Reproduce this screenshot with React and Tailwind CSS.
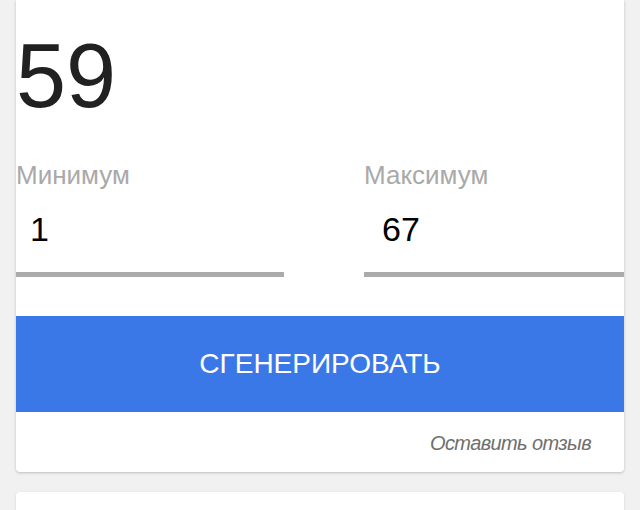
import React, { useState } from 'react';

const Field = ({ label, value, onChange, width, pad }) => (
  <div className={width}>
    <div className="text-[26px] leading-none text-[#a9a9a9]">{label}</div>
    <input
      value={value}
      onChange={(e) => onChange(e.target.value.replace(/\D/g, ''))}
      className={`mt-[22px] block w-full border-b-[5px] border-[#aaaaaa] bg-transparent pb-[23px] text-[34px] leading-none text-black outline-none ${pad}`}
    />
  </div>
);

const App = () => {
  const [min, setMin] = useState('1');
  const [max, setMax] = useState('67');
  const [result, setResult] = useState(59);

  const generate = () => {
    const lo = parseInt(min, 10) || 0;
    const hi = parseInt(max, 10) || 0;
    setResult(Math.floor(Math.random() * (hi - lo + 1)) + lo);
  };

  return (
    <div className="min-h-[510px] bg-[#f1f1f1] px-4 font-['Liberation_Sans',Arial,sans-serif]">
      <div className="rounded-b-[4px] bg-white shadow-[0_1px_3px_rgba(0,0,0,0.22)]">
        <div className="pt-[31px] text-[90px] leading-none text-[#212121]">{result}</div>

        <div className="mt-[41px] flex justify-between">
          <Field label="Минимум" value={min} onChange={setMin} width="w-[268px]" pad="pl-[14px]" />
          <Field label="Максимум" value={max} onChange={setMax} width="w-[260px]" pad="pl-[18px]" />
        </div>

        <button
          onClick={generate}
          className="mt-[39px] flex h-[96px] w-full items-center justify-center bg-[#3b78e7] text-[28px] leading-none text-white"
        >
          СГЕНЕРИРОВАТЬ
        </button>

        <div className="flex justify-end pt-[21px] pb-[19px] pr-[33px]">
          <a className="text-[20px] italic leading-none tracking-[-0.6px] text-[#6f6f6f]">Оставить отзыв</a>
        </div>
      </div>

      <div className="mt-[20px] h-[40px] rounded-t-[4px] bg-white shadow-[0_1px_3px_rgba(0,0,0,0.12)]" />
    </div>
  );
};

export default App;
